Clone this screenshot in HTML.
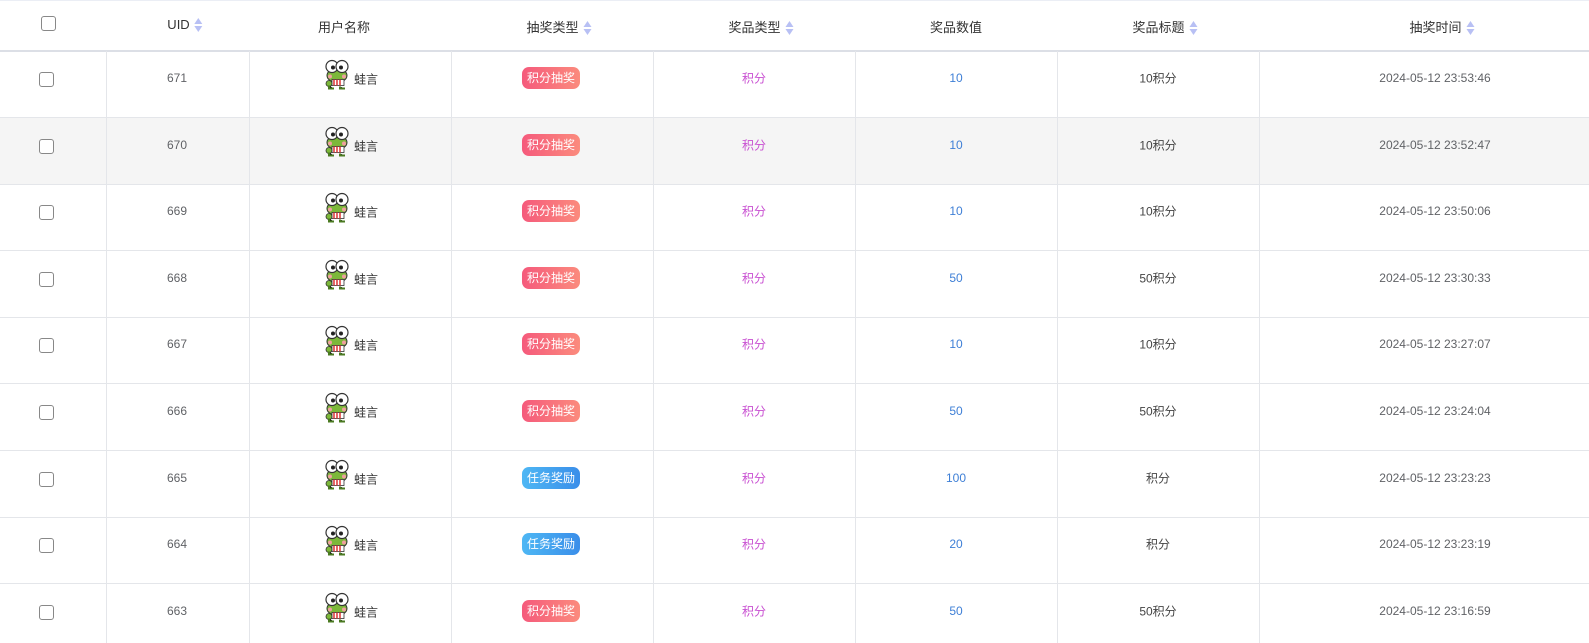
<!DOCTYPE html><html><head><meta charset="utf-8"><style>
html,body{margin:0;width:1589px;height:643px;overflow:hidden;background:#fff}
#w{position:relative;width:1589px;height:643px;overflow:hidden;font-family:"Liberation Sans","Noto Sans CJK SC",sans-serif;font-size:12px;color:#606266}
.hd{position:absolute;top:0;left:0;width:1589px;height:49px;border-top:1px solid #ebeef5;border-bottom:2px solid #dcdfe6;}
.h{position:absolute;top:17px;font-size:13px;color:#333;white-space:nowrap;transform:translateX(-50%)}
.s{display:inline-block;vertical-align:middle;margin-left:5px;width:8px;height:16px;position:relative;top:-1px}
.s:before,.s:after{content:"";position:absolute;left:0;border-left:4px solid transparent;border-right:4px solid transparent}
.s:before{top:1px;border-bottom:6px solid #b8c0f4}.s:after{top:9px;border-top:6px solid #b8c0f4}
.row{position:absolute;left:0;width:1589px;height:66px;border-bottom:1px solid #e4e6ea}
.vl{position:absolute;top:51px;bottom:0;width:1px;background:#e4e6ea}
.c{position:absolute;transform:translate(-50%,-50%);white-space:nowrap}
.cb{position:absolute;width:13px;height:13px;border:1px solid #888;border-radius:3px;background:#fff}
.tag{display:inline-block;color:#fff;font-size:12px;line-height:14px;padding:4px 5px;border-radius:7px;background:linear-gradient(90deg,#f55a7c,#fb8b7d)}
.tag.b{background:linear-gradient(90deg,#4eb7f4,#3a8ee9)}
.pk{color:#c84fd1}.bl{color:#3e7fd6}
</style></head><body><div id="w">
<div class="hd"></div>
<div class="cb" style="left:41px;top:16px"></div>
<div class="h" style="left:185px">UID<span class="s"></span></div>
<div class="h" style="left:344px">用户名称</div>
<div class="h" style="left:559px">抽奖类型<span class="s"></span></div>
<div class="h" style="left:761px">奖品类型<span class="s"></span></div>
<div class="h" style="left:956px">奖品数值</div>
<div class="h" style="left:1165px">奖品标题<span class="s"></span></div>
<div class="h" style="left:1442px">抽奖时间<span class="s"></span></div>
<div id="rows"></div>
<div class="vl" style="left:106px"></div><div class="vl" style="left:249px"></div><div class="vl" style="left:451px"></div><div class="vl" style="left:653px"></div><div class="vl" style="left:855px"></div><div class="vl" style="left:1057px"></div><div class="vl" style="left:1259px"></div>
</div>
<script>
var d=[[671,0,10,'10积分','23:53:46'],[670,0,10,'10积分','23:52:47'],[669,0,10,'10积分','23:50:06'],[668,0,50,'50积分','23:30:33'],[667,0,10,'10积分','23:27:07'],[666,0,50,'50积分','23:24:04'],[665,1,100,'积分','23:23:23'],[664,1,20,'积分','23:23:19'],[663,0,50,'50积分','23:16:59']];
var frog='<svg width="26" height="31" viewBox="0 0 26 31" style="position:absolute;left:-30px;top:-12px"><ellipse cx="13" cy="17" rx="10" ry="7" fill="#7cb83a" stroke="#333" stroke-width="1"/><circle cx="8" cy="8" r="6" fill="#fff" stroke="#333" stroke-width="1.2"/><circle cx="18" cy="8" r="6" fill="#fff" stroke="#333" stroke-width="1.2"/><circle cx="9" cy="9" r="2" fill="#222"/><circle cx="17" cy="9" r="2" fill="#222"/><circle cx="6" cy="18" r="2" fill="#f0a0a0"/><circle cx="20" cy="18" r="2" fill="#f0a0a0"/><rect x="8" y="21" width="12" height="6" fill="#fff" stroke="#333" stroke-width=".8"/><path d="M10 21v6M13 21v6M16 21v6" stroke="#d33" stroke-width="1.5"/><ellipse cx="5" cy="25" rx="3" ry="3" fill="#7cb83a" stroke="#333" stroke-width=".8"/><path d="M5 27v3h5M16 28v2h5" stroke="#4a7a20" stroke-width="2"/></svg>';
var h='';d.forEach(function(r,i){var t=51+i*66.6;var cy=t+27;
h+='<div class="row" style="top:'+t+'px;'+(i==1?'background:#f5f5f5':'')+'"></div>'+
'<div class="cb" style="left:39px;top:'+(cy-6)+'px"></div>'+
'<div class="c" style="left:177px;top:'+cy+'px">'+r[0]+'</div>'+
'<div class="c" style="left:366px;top:'+(cy+1)+'px;color:#333">'+frog+'蛙言</div>'+
'<div class="c" style="left:551px;top:'+cy+'px"><span class="tag'+(r[1]?' b':'')+'">'+(r[1]?'任务奖励':'积分抽奖')+'</span></div>'+
'<div class="c pk" style="left:754px;top:'+cy+'px">积分</div>'+
'<div class="c bl" style="left:956px;top:'+cy+'px">'+r[2]+'</div>'+
'<div class="c" style="left:1158px;top:'+cy+'px;color:#444">'+r[3]+'</div>'+
'<div class="c" style="left:1435px;top:'+cy+'px">2024-05-12 '+r[4]+'</div>';});
document.getElementById('rows').innerHTML=h;
</script></body></html>
